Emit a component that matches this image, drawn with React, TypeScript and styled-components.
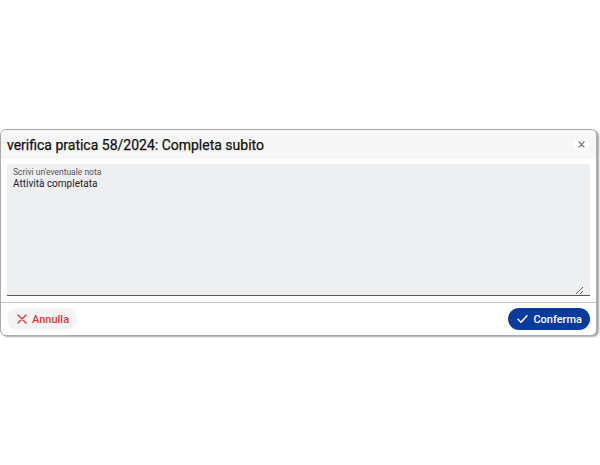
import React, { useState } from "react"
import styled, { createGlobalStyle } from "styled-components"

// ■■■■■■■■■■■■■■■■■■■■■■■■■■■■■■■■■■■■■■■■■■■■■■■■■■■■■■■■■■■■■■■■■■■■■■■■■■■■■

const GlobalStyle = createGlobalStyle`
	html, body {
		margin: 0;
		padding: 0;
		background: #ffffff;
		font-family: Roboto, "Liberation Sans", sans-serif;
	}
	* {
		box-sizing: border-box;
	}
`

export default function App() {
	const [nota, setNota] = useState("Attività completata")

	return (
		<StyledPage>
			<GlobalStyle />
			<StyledDialog>
				<StyledHeader>
					<StyledTitle>verifica pratica 58/2024: Completa subito</StyledTitle>
					<StyledClose aria-label="chiudi">
						<svg width="7" height="7" viewBox="0 0 8 8">
							<path d="M1 1L7 7M7 1L1 7" stroke="#666" strokeWidth="1.2" strokeLinecap="round" />
						</svg>
					</StyledClose>
				</StyledHeader>

				<StyledBody>
					<StyledField>
						<StyledLabel>Scrivi un'eventuale nota</StyledLabel>
						<StyledTextarea value={nota} onChange={(e) => setNota(e.target.value)} />
					</StyledField>
				</StyledBody>

				<StyledFooter>
					<StyledButton $variant="cancel">
						<svg width="10" height="10" viewBox="0 0 10 10">
							<path d="M1 1L9 9M9 1L1 9" stroke="currentColor" strokeWidth="1.4" strokeLinecap="round" />
						</svg>
						Annulla
					</StyledButton>
					<StyledButton $variant="confirm">
						<svg width="11" height="10" viewBox="0 0 11 10">
							<path d="M1 5.2L4 8.2L10 1.8" stroke="currentColor" strokeWidth="1.5" fill="none" strokeLinecap="round" strokeLinejoin="round" />
						</svg>
						Conferma
					</StyledButton>
				</StyledFooter>
			</StyledDialog>
		</StyledPage>
	)
}

// 〓〓〓〓〓〓〓〓〓〓〓〓〓〓〓〓〓〓〓〓〓〓〓〓〓〓〓〓〓〓	STYLED_COMPONENTS

const StyledPage = styled.div`
	height: 465px;
	display: flex;
	align-items: center;
`

const StyledDialog = styled.div`
	width: 597px;
	height: 207px;
	border: 1px solid #a9a9a9;
	border-radius: 6px;
	background: #ffffff;
	box-shadow: 2px 1px 2px rgba(0, 0, 0, 0.35);
	display: flex;
	flex-direction: column;
	overflow: hidden;
`

const StyledHeader = styled.div`
	height: 29px;
	flex-shrink: 0;
	background: #f7f7f7;
	display: flex;
	align-items: center;
	justify-content: space-between;
	padding: 0 7px 0 6px;
`

const StyledTitle = styled.h1`
	margin: 0;
	font-size: 14px;
	font-weight: 400;
	color: #111;
	-webkit-text-stroke: 0.25px #111;
`

const StyledClose = styled.button`
	width: 15px;
	height: 15px;
	border-radius: 50%;
	border: none;
	background: #ffffff;
	display: flex;
	align-items: center;
	justify-content: center;
	padding: 0;
	cursor: pointer;
`

const StyledBody = styled.div`
	flex-shrink: 0;
	padding: 5px 6px 6px 6px;
	border-bottom: 1px solid #c8c8c8;
`

const StyledField = styled.label`
	display: flex;
	flex-direction: column;
	height: 132px;
	background: #eeeff0;
	border-radius: 4px 4px 0 0;
	border-bottom: 1px solid #555;
	padding: 3px 6px 0 6px;
	overflow: hidden;
`

const StyledLabel = styled.span`
	font-size: 8.5px;
	color: #555;
	line-height: 10px;
`

const StyledTextarea = styled.textarea`
	flex: 1;
	border: none;
	outline: none;
	background: transparent;
	font-family: Roboto, "Liberation Sans", sans-serif;
	font-size: 10px;
	color: #222;
	padding: 0;
	margin: 0;
	resize: vertical;
	line-height: 13px;
`

const StyledFooter = styled.div`
	flex: 1;
	display: flex;
	align-items: center;
	justify-content: space-between;
	padding: 0 6px;
`

const StyledButton = styled.button<{ $variant: "cancel" | "confirm" }>`
	display: flex;
	align-items: center;
	gap: 5px;
	height: 22px;
	padding: ${(p) => (p.$variant === "confirm" ? "0 8px 0 9px" : "0 8px 0 10px")};
	border: none;
	border-radius: 11px;
	font-family: Roboto, "Liberation Sans", sans-serif;
	font-size: 11px;
	font-weight: 500;
	letter-spacing: 0;
	cursor: pointer;
	background: ${(p) => (p.$variant === "confirm" ? "#0a3a9c" : "#f4f4f4")};
	color: ${(p) => (p.$variant === "confirm" ? "#ffffff" : "#d83a3a")};
`
